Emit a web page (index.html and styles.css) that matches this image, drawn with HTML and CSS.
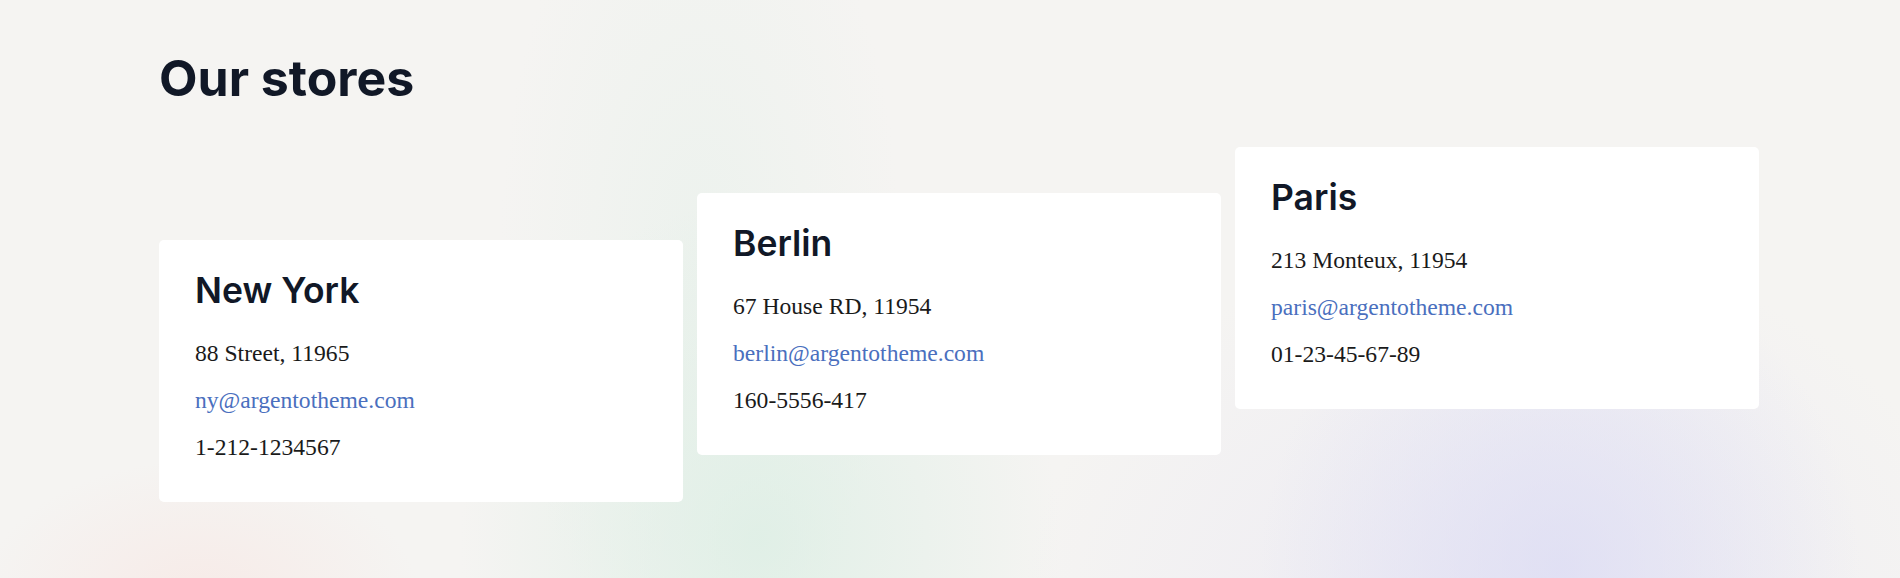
FILE: index.html
```html
<!DOCTYPE html>
<html lang="en">
<head>
<meta charset="utf-8">
<title>Our stores</title>
<link rel="stylesheet" href="styles.css">
</head>
<body>
<main class="page">
  <section class="stores">
    <h1 class="stores__title">Our stores</h1>
    <div class="stores__grid">
      <article class="store store--low">
        <h2 class="store__name">New York</h2>
        <p class="store__line">88 Street, 11965</p>
        <p class="store__line"><a class="store__link" href="#">ny@argentotheme.com</a></p>
        <p class="store__line">1-212-1234567</p>
      </article>
      <article class="store store--mid">
        <h2 class="store__name">Berlin</h2>
        <p class="store__line">67 House RD, 11954</p>
        <p class="store__line"><a class="store__link" href="#">berlin@argentotheme.com</a></p>
        <p class="store__line">160-5556-417</p>
      </article>
      <article class="store">
        <h2 class="store__name">Paris</h2>
        <p class="store__line">213 Monteux, 11954</p>
        <p class="store__line"><a class="store__link" href="#">paris@argentotheme.com</a></p>
        <p class="store__line">01-23-45-67-89</p>
      </article>
    </div>
  </section>
</main>
</body>
</html>
```
FILE: styles.css
```css
html, body {
  margin: 0;
  padding: 0;
}

body {
  width: 1900px;
  height: 578px;
  overflow: hidden;
  background-color: #f5f4f2;
  background-image:
    radial-gradient(ellipse 300px 320px at 1560px 570px, rgba(220, 220, 244, 0.75), rgba(220, 220, 244, 0) 100%),
    radial-gradient(ellipse 480px 380px at 1500px 620px, rgba(232, 230, 244, 0.7), rgba(232, 230, 244, 0) 100%),
    radial-gradient(ellipse 300px 340px at 760px 540px, rgba(218, 238, 227, 0.75), rgba(218, 238, 227, 0) 100%),
    radial-gradient(ellipse 200px 420px at 700px 250px, rgba(228, 240, 233, 0.5), rgba(228, 240, 233, 0) 100%),
    radial-gradient(ellipse 220px 140px at 200px 600px, rgba(248, 228, 224, 0.6), rgba(248, 228, 224, 0) 100%);
  font-family: "Liberation Serif", "Times New Roman", serif;
  color: #1a1a1a;
}

.page {
  padding: 48px 0 0 159px;
}

.stores__title {
  margin: 0;
  font-family: Inter, "Noto Sans", sans-serif;
  font-weight: 700;
  font-size: 50px;
  line-height: 60px;
  letter-spacing: 0;
  color: #111827;
}

.stores__grid {
  display: grid;
  grid-template-columns: repeat(3, 524px);
  column-gap: 14px;
  align-items: start;
  margin-top: 39px;
}

.store {
  background: #ffffff;
  border-radius: 5px;
  padding: 30px 36px 37px;
}

.store--mid {
  margin-top: 46px;
}

.store--low {
  margin-top: 93px;
}

.store__name {
  margin: 0 0 23px;
  font-family: Inter, "Noto Sans", sans-serif;
  font-weight: 600;
  font-size: 35.5px;
  line-height: 42px;
  color: #111827;
}

.store__line {
  margin: 0 0 11px;
  font-size: 23.6px;
  line-height: 36px;
}

.store__line:last-child {
  margin-bottom: 0;
}

.store__link {
  color: #4a6fbe;
  text-decoration: none;
}
```
